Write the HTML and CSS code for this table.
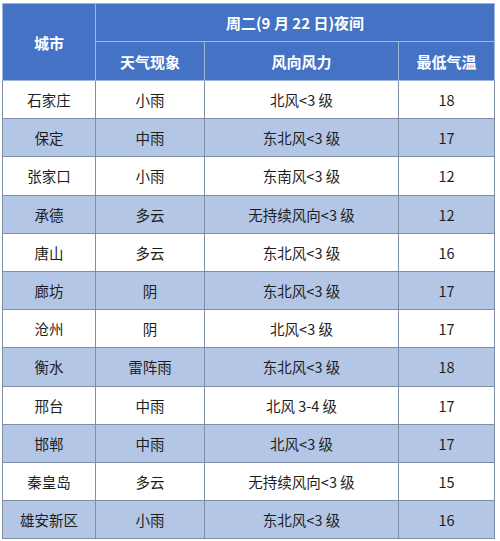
FILE: index.html
```html
<!DOCTYPE html>
<html lang="zh">
<head>
<meta charset="utf-8">
<link rel="stylesheet" href="styles.css">
</head>
<body>
<div class="wrap">
<table class="wx">
  <colgroup>
    <col class="c1"><col class="c2"><col class="c3"><col class="c4">
  </colgroup>
  <thead>
    <tr class="h1">
      <th rowspan="2">城市</th>
      <th colspan="3">周二(9 月 22 日)夜间</th>
    </tr>
    <tr class="h2">
      <th>天气现象</th>
      <th>风向风力</th>
      <th>最低气温</th>
    </tr>
  </thead>
  <tbody>
    <tr><td>石家庄</td><td>小雨</td><td>北风&lt;3 级</td><td>18</td></tr>
    <tr class="alt"><td>保定</td><td>中雨</td><td>东北风&lt;3 级</td><td>17</td></tr>
    <tr><td>张家口</td><td>小雨</td><td>东南风&lt;3 级</td><td>12</td></tr>
    <tr class="alt"><td>承德</td><td>多云</td><td>无持续风向&lt;3 级</td><td>12</td></tr>
    <tr><td>唐山</td><td>多云</td><td>东北风&lt;3 级</td><td>16</td></tr>
    <tr class="alt"><td>廊坊</td><td>阴</td><td>东北风&lt;3 级</td><td>17</td></tr>
    <tr><td>沧州</td><td>阴</td><td>北风&lt;3 级</td><td>17</td></tr>
    <tr class="alt"><td>衡水</td><td>雷阵雨</td><td>东北风&lt;3 级</td><td>18</td></tr>
    <tr><td>邢台</td><td>中雨</td><td>北风 3-4 级</td><td>17</td></tr>
    <tr class="alt"><td>邯郸</td><td>中雨</td><td>北风&lt;3 级</td><td>17</td></tr>
    <tr><td>秦皇岛</td><td>多云</td><td>无持续风向&lt;3 级</td><td>15</td></tr>
    <tr class="alt"><td>雄安新区</td><td>小雨</td><td>东北风&lt;3 级</td><td>16</td></tr>
  </tbody>
</table>
</div>
</body>
</html>
```
FILE: styles.css
```css
html, body {
  margin: 0;
  padding: 0;
  background: #ffffff;
}
.wrap {
  padding: 3px 6px 3px 2px;
}
.wx {
  border-collapse: collapse;
  width: 492px;
  table-layout: fixed;
  font-family: "Microsoft YaHei", "Noto Sans CJK SC", "Noto Sans", sans-serif;
  font-size: 14.5px;
  color: #1e1e1e;
}
.c1 { width: 93px; }
.c2 { width: 109px; }
.c3 { width: 194px; }
.c4 { width: 96px; }
.wx th, .wx td {
  border: 1px solid #7e8ea6;
  text-align: center;
  padding: 0;
}
.wx th {
  background: #4472c4;
  color: #ffffff;
  font-weight: bold;
  font-size: 15px;
  border-color: #9fb4db;
}
.h1 th { height: 37px; }
.h2 th { height: 38px; }
.wx td {
  height: 37.2px;
}
.wx tr.alt td {
  background: #b4c6e6;
}
```
